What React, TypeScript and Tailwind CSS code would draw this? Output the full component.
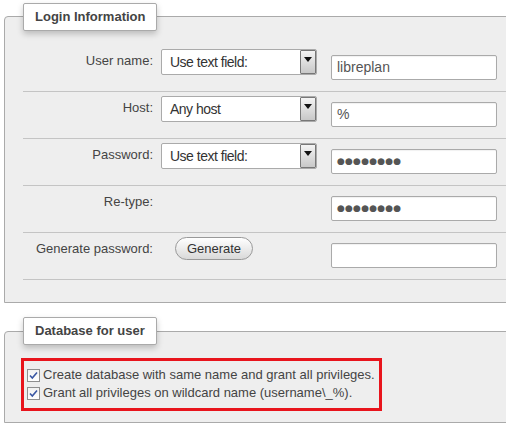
// phpMyAdmin-style "add user" form: login information + database for user
import React from "react";

type Row = {
  label: string;
  select?: string;
  value?: string;
  password?: boolean;
  generate?: boolean;
};

const rows: Row[] = [
  { label: "User name:", select: "Use text field:", value: "libreplan" },
  { label: "Host:", select: "Any host", value: "%" },
  { label: "Password:", select: "Use text field:", password: true },
  { label: "Re-type:", password: true },
  { label: "Generate password:", generate: true, value: "" },
];

const Legend: React.FC<{ text: string; className: string }> = ({ text, className }) => (
  <div
    className={`absolute left-[18px] h-[28px] flex items-center px-[11px] bg-white border border-[#aaa] rounded-[2px] shadow-[0_3px_6px_rgba(0,0,0,0.22)] text-[13px] font-bold text-[#444] ${className}`}
  >
    {text}
  </div>
);

const FakeSelect: React.FC<{ text: string }> = ({ text }) => (
  <div className="mt-[4px] ml-[8px] w-[156px] h-[26px] flex bg-white border border-[#aaa] rounded-[2px]">
    <span className="flex-1 pl-[8px] leading-[24px] text-[14px] tracking-[-0.5px] text-[#333]">
      {text}
    </span>
    <span className="w-[16px] h-full flex justify-center pt-[6px] border border-[#777] rounded-[1px] bg-gradient-to-b from-[#f4f4f4] to-[#c8c8c8]">
      <svg width="8" height="5" viewBox="0 0 8 5">
        <path d="M0 0h8L4 5z" fill="#111" />
      </svg>
    </span>
  </div>
);

const TextBox: React.FC<{ value?: string; password?: boolean; ml: string }> = ({ value, password, ml }) => (
  <div
    className={`mt-[10px] ${ml} w-[166px] h-[25px] flex items-center pl-[5px] bg-white border border-[#aaa] rounded-[2px] shadow-[inset_0_1px_1px_rgba(0,0,0,0.06)] text-[14px] text-[#555]`}
  >
    {password ? (
      <span className="font-['DejaVu_Sans'] text-[9px] tracking-[0.2px] text-[#555]">●●●●●●●●</span>
    ) : (
      value
    )}
  </div>
);

const Check: React.FC = () => (
  <span className="w-[13px] h-[13px] shrink-0 flex items-center justify-center border border-[#8f8f8f] bg-gradient-to-b from-[#f2f2f2] to-white">
    <svg width="9" height="9" viewBox="0 0 9 9">
      <path d="M1 4.5l2.3 2.5L8 1.5" fill="none" stroke="#3a57a3" strokeWidth="1.6" />
    </svg>
  </span>
);

export default function App() {
  return (
    <div className="relative w-[506px] h-[427px] overflow-hidden bg-white font-['Liberation_Sans',Arial,sans-serif] text-[#444]">
      {/* login information */}
      <div className="relative mt-[16px] ml-[4px] w-[540px] pt-[28px] pb-[22px] bg-[#eee] border border-[#aaa] rounded-tl-[4px]">
        <Legend text="Login Information" className="top-[-14px]" />
        {rows.map((r, i) => (
          <div key={i} className="ml-[18px] h-[47px] flex items-start border-b border-[#c4c4c4]">
            <div className="w-[130px] pt-[6px] text-right text-[13px] text-[#444]">{r.label}</div>
            {r.select ? (
              <FakeSelect text={r.select} />
            ) : r.generate ? (
              <button className="mt-[4px] ml-[22px] w-[78px] h-[23px] rounded-full border border-[#999] bg-gradient-to-b from-white to-[#d9d9d9] text-[13px] text-[#333]">
                Generate
              </button>
            ) : (
              <div className="w-[164px]" />
            )}
            <TextBox value={r.value} password={r.password} ml={r.generate ? "ml-[78px]" : "ml-[14px]"} />
          </div>
        ))}
      </div>

      {/* database for user */}
      <div className="relative mt-[28px] ml-[4px] w-[540px] pt-[26px] pb-[11px] bg-[#eee] border border-[#aaa] rounded-tl-[4px]">
        <Legend text="Database for user" className="top-[-15px]" />
        <div className="ml-[16px] w-[361px] h-[53px] pt-[5px] pl-[3px] border-[3px] border-[#e8141c] text-[13px] text-[#444]">
          <label className="h-[18px] flex items-center gap-[3px]">
            <Check />
            Create database with same name and grant all privileges.
          </label>
          <label className="h-[18px] flex items-center gap-[3px]">
            <Check />
            Grant all privileges on wildcard name (username\_%).
          </label>
        </div>
      </div>
    </div>
  );
}
